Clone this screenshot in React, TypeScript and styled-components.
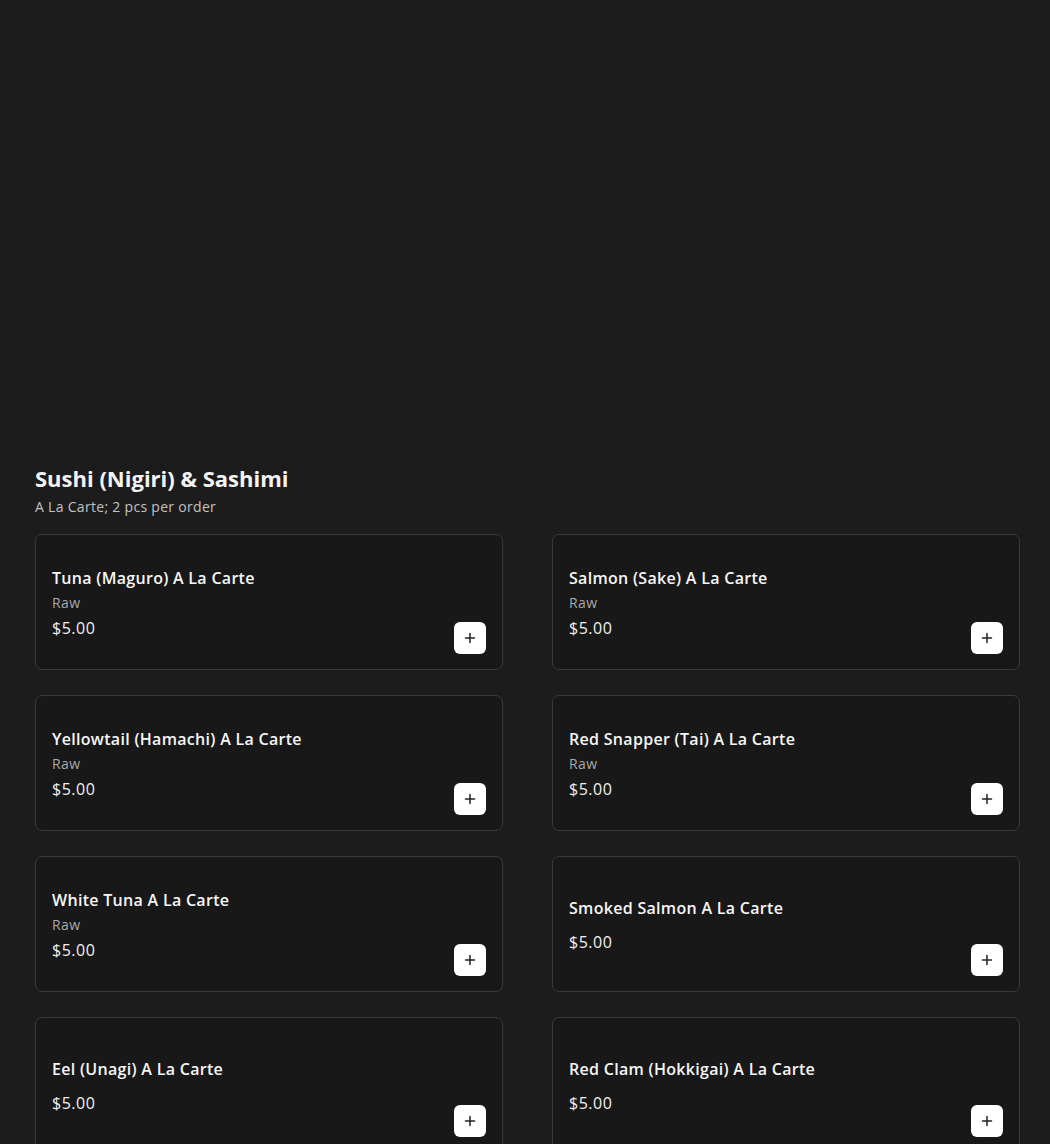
import React from 'react';
import styled, { createGlobalStyle } from 'styled-components';

const GlobalStyle = createGlobalStyle`
  html, body {
    margin: 0;
    padding: 0;
    background: #1c1c1c;
    overflow: hidden;
  }
  body {
    font-family: 'Open Sans', 'Liberation Sans', sans-serif;
    color: #ffffff;
  }
`;

const Page = styled.div`
  width: 1050px;
  height: 1144px;
  padding: 463px 30px 0 35px;
  box-sizing: border-box;
`;

const SectionTitle = styled.h2`
  margin: 0;
  font-size: 22px;
  font-weight: 700;
  line-height: 30px;
  color: #f4f4f4;
`;

const SectionSub = styled.p`
  margin: 3px 0 16px;
  font-size: 14px;
  line-height: 22px;
  letter-spacing: 0.3px;
  color: #c2c2c2;
`;

const Grid = styled.div`
  display: grid;
  grid-template-columns: 1fr 1fr;
  column-gap: 49px;
  row-gap: 25px;
`;

const Card = styled.div`
  position: relative;
  height: 136px;
  box-sizing: border-box;
  border: 1px solid #3a3a3a;
  border-radius: 7px;
  background: #181818;
  padding: 2px 16px 0;
  display: flex;
  flex-direction: column;
  justify-content: center;
`;

const Title = styled.div`
  font-size: 16px;
  font-weight: 600;
  line-height: 22px;
  letter-spacing: 0.3px;
  color: #f6f6f6;
`;

const Desc = styled.div`
  font-size: 14px;
  line-height: 20px;
  margin-top: 4px;
  letter-spacing: 0.4px;
  color: #a8a8a8;
`;

const Price = styled.div<{ $gap: number }>`
  font-size: 16px;
  line-height: 22px;
  letter-spacing: 0.5px;
  margin-top: ${({ $gap }) => $gap}px;
  color: #f0f0f0;
`;

const AddBtn = styled.button`
  position: absolute;
  right: 16px;
  bottom: 15px;
  width: 32px;
  height: 32px;
  border: none;
  border-radius: 6px;
  background: #ffffff;
  display: flex;
  align-items: center;
  justify-content: center;
  padding: 0;
  cursor: pointer;
`;

const items = [
  { name: 'Tuna (Maguro) A La Carte', desc: 'Raw' },
  { name: 'Salmon (Sake) A La Carte', desc: 'Raw' },
  { name: 'Yellowtail (Hamachi) A La Carte', desc: 'Raw' },
  { name: 'Red Snapper (Tai) A La Carte', desc: 'Raw' },
  { name: 'White Tuna A La Carte', desc: 'Raw' },
  { name: 'Smoked Salmon A La Carte' },
  { name: 'Eel (Unagi) A La Carte' },
  { name: 'Red Clam (Hokkigai) A La Carte' },
];

const Plus = () => (
  <svg width="12" height="12" viewBox="0 0 12 12">
    <path d="M6 1.5v9M1.5 6h9" stroke="#222" strokeWidth="1.5" strokeLinecap="round" />
  </svg>
);

const App = () => (
  <>
    <GlobalStyle />
    <Page>
      <SectionTitle>Sushi (Nigiri) &amp; Sashimi</SectionTitle>
      <SectionSub>A La Carte; 2 pcs per order</SectionSub>
      <Grid>
        {items.map((it) => (
          <Card key={it.name}>
            <Title>{it.name}</Title>
            {it.desc && <Desc>{it.desc}</Desc>}
            <Price $gap={it.desc ? 4 : 12}>$5.00</Price>
            <AddBtn aria-label="Add">
              <Plus />
            </AddBtn>
          </Card>
        ))}
      </Grid>
    </Page>
  </>
);

export default App;
